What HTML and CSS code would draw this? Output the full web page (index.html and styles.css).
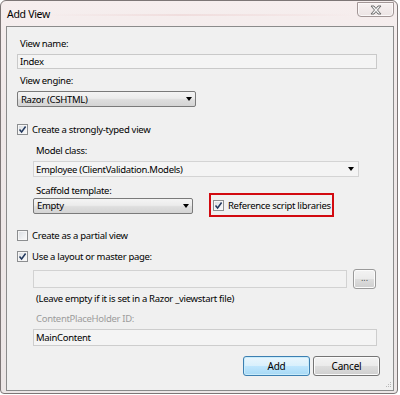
FILE: index.html
```html
<!DOCTYPE html>
<html>
<head>
<meta charset="utf-8">
<link rel="stylesheet" href="styles.css">
</head>
<body>
<div class="window">
  <div class="titlebar">
    <span class="title">Add View</span>
    <div class="close">
      <svg width="12" height="10" viewBox="0 0 12 10"><path d="M1 1 L4 1 L6 3.5 L8 1 L11 1 L7.5 5 L11 9 L8 9 L6 6.5 L4 9 L1 9 L4.5 5 Z" fill="#f4f4f4" stroke="#6d6d6d" stroke-width="1" stroke-linejoin="round"/></svg>
    </div>
  </div>
  <div class="client">
    <div class="label l-name">View name:</div>
    <div class="textbox tb-name">Index</div>
    <div class="label l-engine">View engine:</div>
    <div class="combo combo-engine"><span>Razor (CSHTML)</span><i class="arrow"></i></div>
    <div class="check c-typed"><span class="box"><svg width="9" height="9" viewBox="0 0 9 9"><path d="M1.5 4.5 L3.6 7 L7.6 1.5" fill="none" stroke="#22385e" stroke-width="1.5"/></svg></span>Create a strongly-typed view</div>
    <div class="group">
      <div class="label l-model">Model class:</div>
      <div class="flatcombo"><span>Employee (ClientValidation.Models)</span><i class="arrow"></i></div>
      <div class="label l-scaffold">Scaffold template:</div>
      <div class="scaffold-row">
        <div class="combo combo-scaffold"><span>Empty</span><i class="arrow"></i></div>
        <div class="highlight">
          <div class="check"><span class="box"><svg width="9" height="9" viewBox="0 0 9 9"><path d="M1.5 4.5 L3.6 7 L7.6 1.5" fill="none" stroke="#22385e" stroke-width="1.5"/></svg></span>Reference script libraries</div>
        </div>
      </div>
    </div>
    <div class="check c-partial"><span class="box"></span>Create as a partial view</div>
    <div class="check c-layout"><span class="box"><svg width="9" height="9" viewBox="0 0 9 9"><path d="M1.5 4.5 L3.6 7 L7.6 1.5" fill="none" stroke="#22385e" stroke-width="1.5"/></svg></span>Use a layout or master page:</div>
    <div class="group">
      <div class="layout-row">
        <div class="textbox tb-layout"></div>
        <div class="btn btn-browse">...</div>
      </div>
      <div class="label l-hint">(Leave empty if it is set in a Razor _viewstart file)</div>
      <div class="label l-cph">ContentPlaceHolder ID:</div>
      <div class="textbox tb-main">MainContent</div>
    </div>
    <div class="buttons">
      <div class="btn btn-add">Add</div>
      <div class="btn btn-cancel">Cancel</div>
    </div>
    <div class="grip">
      <svg width="10" height="10" viewBox="0 0 10 10"><g fill="#b8b8b8"><rect x="8" y="2" width="1" height="1"/><rect x="6" y="4" width="1" height="1"/><rect x="8" y="4" width="1" height="1"/><rect x="4" y="6" width="1" height="1"/><rect x="6" y="6" width="1" height="1"/><rect x="8" y="6" width="1" height="1"/></g></svg>
    </div>
  </div>
</div>
</body>
</html>
```
FILE: styles.css
```css
* { box-sizing: border-box; }
html, body { margin: 0; padding: 0; }
body {
  width: 400px;
  height: 395px;
  overflow: hidden;
  background: #ffffff;
  font-family: "Noto Sans", "Open Sans", sans-serif;
  font-size: 9.5px;
  letter-spacing: -0.3px;
  color: #000;
}
.window {
  width: 398px;
  height: 394px;
  border: 1px solid #7d7676;
  border-radius: 6px 6px 4px 4px;
  background: linear-gradient(180deg, #f6eeee 0%, #efe8e8 30%, #ece6e6 100%);
  padding: 0 3px 2px 5px;
  display: flex;
  flex-direction: column;
}
.titlebar {
  height: 25px;
  flex: none;
  display: flex;
  justify-content: space-between;
  align-items: flex-start;
  background: linear-gradient(90deg, rgba(240,214,214,0) 10%, rgba(236,208,208,0.55) 45%, rgba(240,214,214,0.3) 75%, rgba(240,214,214,0) 90%) 0 13px / 100% 2px no-repeat;
}
.title {
  margin-top: 6px;
  padding-left: 1px;
  line-height: 15px;
  font-size: 10.5px;
  letter-spacing: -0.3px;
  color: #000;
}
.close {
  width: 37px;
  height: 15px;
  margin-top: 1px;
  border: 1px solid #a29696;
  border-radius: 0 0 4px 4px;
  background: linear-gradient(180deg, #f7f1f1, #ece4e4);
  box-shadow: inset 0 0 0 1px #fbf8f8;
  display: flex;
  align-items: center;
  justify-content: center;
}
.client {
  flex: 1;
  position: relative;
  border: 1px solid #8b8b8b;
  background: #f0f0f0;
  padding-left: 10px;
  display: flex;
  flex-direction: column;
  align-items: flex-start;
}
.label {
  line-height: 15px;
  height: 15px;
  padding-left: 3px;
  white-space: nowrap;
}
.l-name { margin-top: 9px; }
.textbox {
  border: 1px solid #c9c9c9;
  background: #f4f4f4;
  padding-left: 2px;
  white-space: nowrap;
  display: flex;
  align-items: center;
}
.tb-name { margin-top: 3px; width: 360px; height: 15px; }
.l-engine { margin-top: 4px; }
.combo {
  position: relative;
  border: 1px solid #7a7a7a;
  border-radius: 2px;
  background: linear-gradient(180deg, #f4f4f4 0%, #ececec 45%, #dedede 55%, #d4d4d4 100%);
  padding-left: 3px;
  display: flex;
  align-items: center;
  justify-content: space-between;
  white-space: nowrap;
}
.arrow {
  display: block;
  width: 0;
  height: 0;
  border-left: 3px solid transparent;
  border-right: 3px solid transparent;
  border-top: 4px solid #000;
  margin-right: 3px;
}
.combo-engine { margin-top: 3px; width: 179px; height: 16px; }
.check {
  display: flex;
  align-items: center;
  height: 15px;
  line-height: 15px;
  white-space: nowrap;
}
.box {
  width: 11px;
  height: 11px;
  margin-right: 4px;
  border: 1px solid #8c8e90;
  background: linear-gradient(135deg, #d9dce1 0%, #eef0f2 60%, #fafafa 100%);
  box-shadow: inset 0 0 0 1px #f6f6f6;
  display: flex;
  align-items: center;
  justify-content: center;
  flex: none;
}
.c-typed { margin-top: 15px; }
.group {
  margin-left: 16px;
  display: flex;
  flex-direction: column;
  align-items: flex-start;
}
.l-model { margin-top: 6px; }
.flatcombo {
  margin-top: 3px;
  width: 326px;
  height: 16px;
  border: 1px solid #d4d4d4;
  background: #f4f4f4;
  padding-left: 2px;
  display: flex;
  align-items: center;
  justify-content: space-between;
  white-space: nowrap;
}
.flatcombo .arrow { margin-right: 4px; }
.l-scaffold { margin-top: 6px; }
.scaffold-row {
  margin-top: -5px;
  height: 24px;
  display: flex;
  align-items: center;
}
.combo-scaffold { width: 160px; height: 16px; margin-top: 1px; }
.highlight {
  margin-left: 16px;
  width: 125px;
  height: 24px;
  border: 2px solid #d20a10;
  padding-left: 2px;
  display: flex;
  align-items: center;
}
.c-partial { margin-top: 11px; }
.c-layout { margin-top: 6px; }
.layout-row {
  margin-top: 5px;
  height: 20px;
  display: flex;
  align-items: center;
}
.tb-layout { width: 314px; height: 18px; background: #f2f2f2; border-color: #d2d2d2; }
.btn {
  display: flex;
  align-items: center;
  justify-content: center;
  border: 1px solid #747474;
  border-radius: 3px;
  background: linear-gradient(180deg, #f3f3f3 0%, #ebebeb 48%, #dddddd 52%, #cfcfcf 100%);
  box-shadow: inset 0 0 0 1px #fbfbfb;
  white-space: nowrap;
}
.btn-browse {
  margin-left: 6px;
  width: 23px;
  height: 20px;
  border-color: #9a9a9a;
  color: #555;
  font-size: 9px;
  letter-spacing: 0;
  line-height: 1;
  padding-bottom: 3px;
}
.l-hint { margin-top: 2px; }
.l-cph { margin-top: 5px; color: #9c9c9c; }
.tb-main { margin-top: 3px; width: 344px; height: 17px; border-color: #cdcdcd; }
.buttons {
  align-self: flex-end;
  margin-right: 13px;
  margin-top: 10px;
  display: flex;
  gap: 3px;
}
.buttons .btn { width: 67px; height: 20px; font-size: 10px; letter-spacing: -0.2px; }
.btn-add {
  border-color: #3c7fb1;
  background: linear-gradient(180deg, #eaf6fd 0%, #d9f0fc 48%, #bee6fd 52%, #a7d9f5 100%);
  box-shadow: inset 0 0 0 1px #c9ecfb;
}
.grip {
  position: absolute;
  right: 1px;
  bottom: 0;
  width: 10px;
  height: 10px;
}
```
